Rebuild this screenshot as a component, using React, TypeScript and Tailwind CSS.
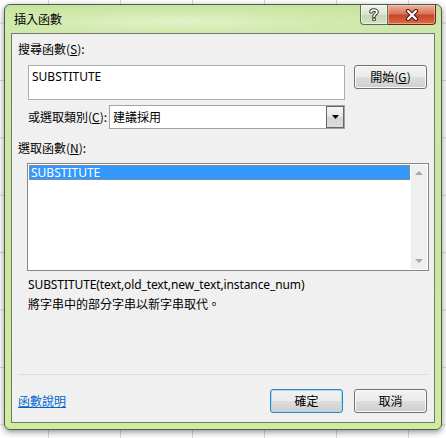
import React from 'react'

const cjk = "font-['Noto_Sans_CJK_TC','Noto_Sans',sans-serif]"

function WinButton({
  children,
  isDefault = false,
}: {
  children: React.ReactNode
  isDefault?: boolean
}) {
  return (
    <button
      className={`flex h-[24px] w-[73px] items-center justify-center rounded-[3px] border text-[12px] leading-none text-black ${
        isDefault
          ? 'border-[#3c7fb1] shadow-[inset_0_0_0_1px_#9fdcf7]'
          : 'border-[#707070] shadow-[inset_0_0_0_1px_#fbfbfb]'
      } bg-[linear-gradient(to_bottom,#f2f2f2_0%,#ebebeb_50%,#dddddd_51%,#cfcfcf_100%)]`}
    >
      {children}
    </button>
  )
}

function TitleButtons() {
  return (
    <div className="flex h-[20px] self-start">
      <div className="flex w-[28px] items-center justify-center rounded-bl-[4px] border border-t-0 border-[#5d6d55] bg-[linear-gradient(to_bottom,#eef4e6_0%,#d9e6cc_50%,#c4d6b3_51%,#d2e2c2_100%)] shadow-[inset_0_0_0_1px_rgba(255,255,255,0.55)]">
        <svg width="10" height="13" viewBox="0 0 10 13">
          <path
            d="M2 4 C2 1.5 8 1.5 8 4 C8 6 5 6 5 8.5"
            fill="none"
            stroke="#3a3a3a"
            strokeWidth="3.6"
            strokeLinecap="round"
          />
          <path
            d="M2 4 C2 1.5 8 1.5 8 4 C8 6 5 6 5 8.5"
            fill="none"
            stroke="#ffffff"
            strokeWidth="1.6"
            strokeLinecap="round"
          />
          <rect x="3.2" y="9.8" width="3.6" height="3" fill="#3a3a3a" />
          <rect x="4.1" y="10.6" width="1.8" height="1.4" fill="#ffffff" />
        </svg>
      </div>
      <div className="flex w-[48px] items-center justify-center rounded-br-[4px] border border-t-0 border-l-0 border-[#6b2416] bg-[linear-gradient(to_bottom,#eab2a0_0%,#d9765c_45%,#c9452a_55%,#d96a48_100%)] shadow-[inset_0_0_0_1px_rgba(255,220,210,0.5)]">
        <svg width="14" height="12" viewBox="0 0 14 12">
          <path
            d="M3 2 L11 10 M11 2 L3 10"
            stroke="#3b1a12"
            strokeWidth="4.2"
            strokeLinecap="round"
          />
          <path
            d="M3 2 L11 10 M11 2 L3 10"
            stroke="#ffffff"
            strokeWidth="2.2"
            strokeLinecap="round"
          />
        </svg>
      </div>
    </div>
  )
}

export default function App() {
  return (
    <div
      className={`relative h-[438px] w-[446px] overflow-hidden bg-white bg-[linear-gradient(to_right,#d9d9d9_1px,transparent_1px),linear-gradient(to_bottom,#d9d9d9_1px,transparent_1px)] bg-[size:72px_57.4px] bg-[position:48px_22.6px] ${cjk}`}
    >
      <div className="absolute top-[4px] left-[4px] flex h-[426px] w-[438px] flex-col rounded-[6px] border border-[#4f5d47] bg-[linear-gradient(to_bottom,#c6e49d_0%,#cfe9ad_8%,#c9e6a2_50%,#d0ec9f_100%)] shadow-[0_2px_6px_rgba(0,0,0,0.45)]">
        {/* title bar */}
        <div className="flex h-[28px] items-start justify-between bg-[radial-gradient(ellipse_at_40%_60%,#e2f2c8_0%,rgba(214,236,180,0.6)_40%,transparent_75%)] pr-[5px] pl-[9px]">
          <span className="mt-[6px] text-[12px] leading-[16px] text-black">插入函數</span>
          <TitleButtons />
        </div>

        {/* client area */}
        <div className="mx-[6px] flex h-[390px] flex-col border border-[#6e7b68] bg-[#f0f0f0] pr-[5px] pl-[6px] pb-[9px] text-[12px] text-black">
          <div className="mt-[7px] h-[16px] leading-[16px]">
            搜尋函數(<u>S</u>):
          </div>
          <div className="mt-[8px] flex items-start">
            <div className="ml-[10px] h-[35px] w-[317px] border border-[#abadb3] bg-white px-[3px] pt-[1px] text-[12px] leading-[20px] font-['Noto_Sans',sans-serif]">
              SUBSTITUTE
            </div>
            <div className="ml-[9px]">
              <WinButton>
                開始(<u>G</u>)
              </WinButton>
            </div>
          </div>
          <div className="mt-[5px] flex h-[24px] items-center">
            <span className="ml-[10px] w-[81px] leading-[16px]">
              或選取類別(<u>C</u>):
            </span>
            <div className="flex h-[24px] w-[236px] items-stretch border border-[#a3a3a3] bg-white">
              <span className="flex-1 pl-[3px] text-[12px] leading-[22px]">建議採用</span>
              <div className="flex w-[18px] items-center justify-center border border-[#666666] bg-[linear-gradient(to_bottom,#f5f5f5_0%,#e5e5e5_50%,#d4d4d4_51%,#dcdcdc_100%)]">
                <svg width="7" height="4" viewBox="0 0 7 4">
                  <path d="M0 0 H7 L3.5 4 Z" fill="#000000" />
                </svg>
              </div>
            </div>
          </div>
          <div className="mt-[11px] h-[16px] leading-[16px]">
            選取函數(<u>N</u>):
          </div>
          <div className="mt-[7px] ml-[9px] flex h-[108px] w-[402px] border border-[#828790] bg-white p-[1px]">
            <div className="flex-1">
              <div className="h-[15px] border border-dotted border-[#c9822e] bg-[#3399ff] pl-[1px] text-[12px] leading-[13px] text-white font-['Noto_Sans',sans-serif]">
                SUBSTITUTE
              </div>
            </div>
            <div className="flex w-[17px] flex-col items-center justify-between border-l border-[#fafafa] bg-[#efefef] py-[6px]">
              <svg width="8" height="4" viewBox="0 0 8 4">
                <path d="M0 4 L4 0 L8 4 Z" fill="#a8a8a8" />
              </svg>
              <svg width="8" height="4" viewBox="0 0 8 4">
                <path d="M0 0 H8 L4 4 Z" fill="#a8a8a8" />
              </svg>
            </div>
          </div>
          <div className="mt-[4px] ml-[10px] h-[19px] leading-[19px] tracking-[-0.1px] font-['Noto_Sans',sans-serif]">
            SUBSTITUTE(text,old_text,new_text,instance_num)
          </div>
          <div className="ml-[10px] h-[19px] leading-[19px]">將字串中的部分字串以新字串取代。</div>
          <div className="flex-1" />
          <div className="h-px w-[411px] bg-[#d5dfe5]" />
          <div className="mt-[14px] flex h-[24px] items-center">
            <span className="flex-1 leading-[16px] text-[#0066cc] underline">函數說明</span>
            <WinButton isDefault>確定</WinButton>
            <div className="ml-[11px] mr-[2px]">
              <WinButton>取消</WinButton>
            </div>
          </div>
        </div>
      </div>
    </div>
  )
}
